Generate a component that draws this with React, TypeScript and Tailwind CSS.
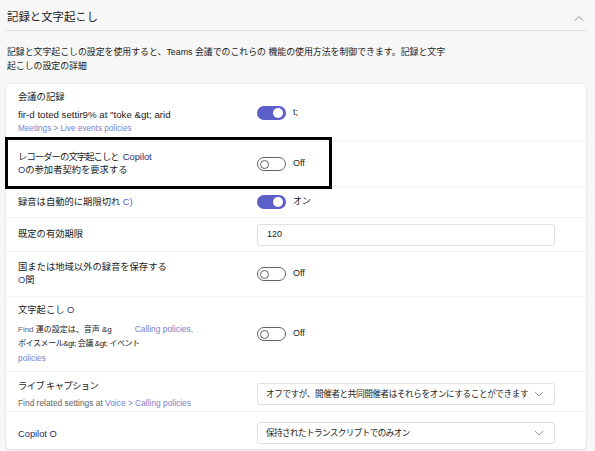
import React from 'react';

const font = "font-['Liberation_Sans','Noto_Sans_CJK_JP',sans-serif]";

const Toggle = ({ on }: { on: boolean }) =>
  on ? (
    <div className="w-[29px] h-[14px] rounded-full bg-[#5b5fc7] flex items-center justify-end px-[3px]">
      <div className="w-[10px] h-[10px] rounded-full bg-white" />
    </div>
  ) : (
    <div className="w-[29px] h-[14px] rounded-full border border-[#616161] flex items-center px-[2px]">
      <div className="w-[9px] h-[9px] rounded-full border border-[#616161] bg-white" />
    </div>
  );

const ToggleCell = ({ on, label }: { on: boolean; label: string }) => (
  <div className="flex items-center gap-[7px]">
    <Toggle on={on} />
    <span className="text-[9px] text-[#1b1b1b]">{label}</span>
  </div>
);

const Chevron = ({ up }: { up?: boolean }) => (
  <svg width="10" height="6" viewBox="0 0 10 6" fill="none" stroke={up ? '#8a8a8a' : '#9a9a9a'} strokeWidth="1">
    {up ? <path d="M1 5.5 L5 1.5 L9 5.5" /> : <path d="M1 1 L5 5 L9 1" />}
  </svg>
);

const Select = ({ value, tight }: { value: string; tight?: boolean }) => (
  <div className="w-[298px] h-[22px] rounded-[3px] border border-[#e0e0e0] bg-white flex items-center justify-between pl-[8px] pr-[10px]">
    <span className={`text-[8.6px] text-[#1b1b1b] whitespace-nowrap ${tight ? 'tracking-[-0.6px]' : 'tracking-[-0.4px]'}`}>{value}</span>
    <Chevron />
  </div>
);

const Row = ({ h, children, right, last }: { h: string; children: React.ReactNode; right: React.ReactNode; last?: boolean }) => (
  <div className={`flex items-center ${h} ${last ? '' : 'border-b border-[#f3f3f3]'}`}>
    <div className="w-[251px] pl-[12px] shrink-0">{children}</div>
    <div>{right}</div>
  </div>
);

export default function App() {
  return (
    <div className={`w-[595px] h-[451px] bg-[#f7f7f7] text-[#1b1b1b] overflow-hidden ${font}`}>
      <div className="mx-[6px] w-[580px]">
        <div className="h-[31px] pt-[6px] flex items-center justify-between border-b border-[#e1e1e1] pl-[1px] pr-[2px]">
          <h1 className="text-[11.4px] text-[#1b1b1b]">記録と文字起こし</h1>
          <Chevron up />
        </div>
        <p className="mt-[14px] pl-[1px] text-[8.9px] leading-[14px]">
          記録と文字起こしの設定を使用すると、Teams 会議でのこれらの 機能の使用方法を制御できます。記録と文字
          <br />
          起こしの設定の詳細
        </p>

        <div className="relative mt-[11px] bg-white rounded-[4px] shadow-[0_0_2px_rgba(0,0,0,0.12),0_1px_2px_rgba(0,0,0,0.1)]">
          <Row h="h-[58px]" right={<ToggleCell on label="t;" />}>
            <div className="text-[9.3px] leading-[13px]">会議の記録</div>
            <div className="text-[9.7px] leading-[19px] mt-[1px]">fir-d toted settir9% at "toke &amp;gt; arid</div>
            <div className="text-[8.2px] leading-[10px] text-[#7b7fc9]">Meetings &gt; Live events policies</div>
          </Row>
          <Row h="h-[45px]" right={<ToggleCell on={false} label="Off" />}>
            <div className="text-[9.3px] leading-[13px] tracking-[-0.9px]">
              レコーダーの文字起こしと<span className="ml-[4px] tracking-normal text-[#2a2a6a]">Copilot</span>
            </div>
            <div className="text-[9.3px] leading-[13px]">
              <span className="text-[#2a3a8a]">O</span>の参加者契約を要求する
            </div>
          </Row>
          <Row h="h-[31px]" right={<ToggleCell on label="オン" />}>
            <div className="text-[9.3px] leading-[13px]">
              録音は自動的に期限切れ <span className="text-[#5b5fc7]">C)</span>
            </div>
          </Row>
          <Row
            h="h-[34px]"
            right={
              <div className="w-[298px] h-[22px] rounded-[3px] border border-[#e0e0e0] bg-white flex items-center pl-[9px] text-[9px]">
                120
              </div>
            }
          >
            <div className="text-[9.3px] leading-[13px]">既定の有効期限</div>
          </Row>
          <Row h="h-[45px]" right={<ToggleCell on={false} label="Off" />}>
            <div className="text-[9.3px] leading-[13px]">国または地域以外の録音を保存する</div>
            <div className="text-[9.3px] leading-[13px]">
              <span className="text-[#2a3a8a]">O</span>関
            </div>
          </Row>
          <Row h="h-[75px]" right={<ToggleCell on={false} label="Off" />}>
            <div className="text-[9.3px] leading-[14px]">
              文字起こし <span className="text-[#2a3a8a]">O</span>
            </div>
            <div className="mt-[5px] text-[8px] leading-[14px]">
              <span className="text-[#616161]">Find</span> 運の設定は、音声 &amp;g
              <span className="ml-[23px] text-[#7b7fc9] text-[8.4px]">Calling policies,</span>
            </div>
            <div className="text-[8px] leading-[14px] tracking-[-0.4px]">ボイスメール&amp;gt; 会議 &amp;gt; イベント</div>
            <div className="text-[8.4px] leading-[14px] text-[#7b7fc9]">policies</div>
          </Row>
          <Row h="h-[40px]" right={<div className="mt-[5px]"><Select value="オフですが、開催者と共同開催者はそれらをオンにすることができます" /></div>}>
            <div className="mt-[4px] text-[9.3px] leading-[14px] tracking-[-0.6px]">ライブ キャプション</div>
            <div className="mt-[4px] text-[8.4px] leading-[12px]">
              <span className="text-[#616161]">Find related settings at </span>
              <span className="text-[#7b7fc9]">Voice &gt; Calling policies</span>
            </div>
          </Row>
          <Row h="h-[37px]" last right={<div className="mt-[5px]"><Select tight value="保持されたトランスクリプトでのみオン" /></div>}>
            <div className="mt-[6px] text-[9.3px] leading-[14px] text-[#1f2a6a]">Copilot O</div>
          </Row>

          <div className="absolute left-[-1px] top-[53px] w-[327px] h-[52px] border-[3px] border-black pointer-events-none" />
        </div>
      </div>
    </div>
  );
}
